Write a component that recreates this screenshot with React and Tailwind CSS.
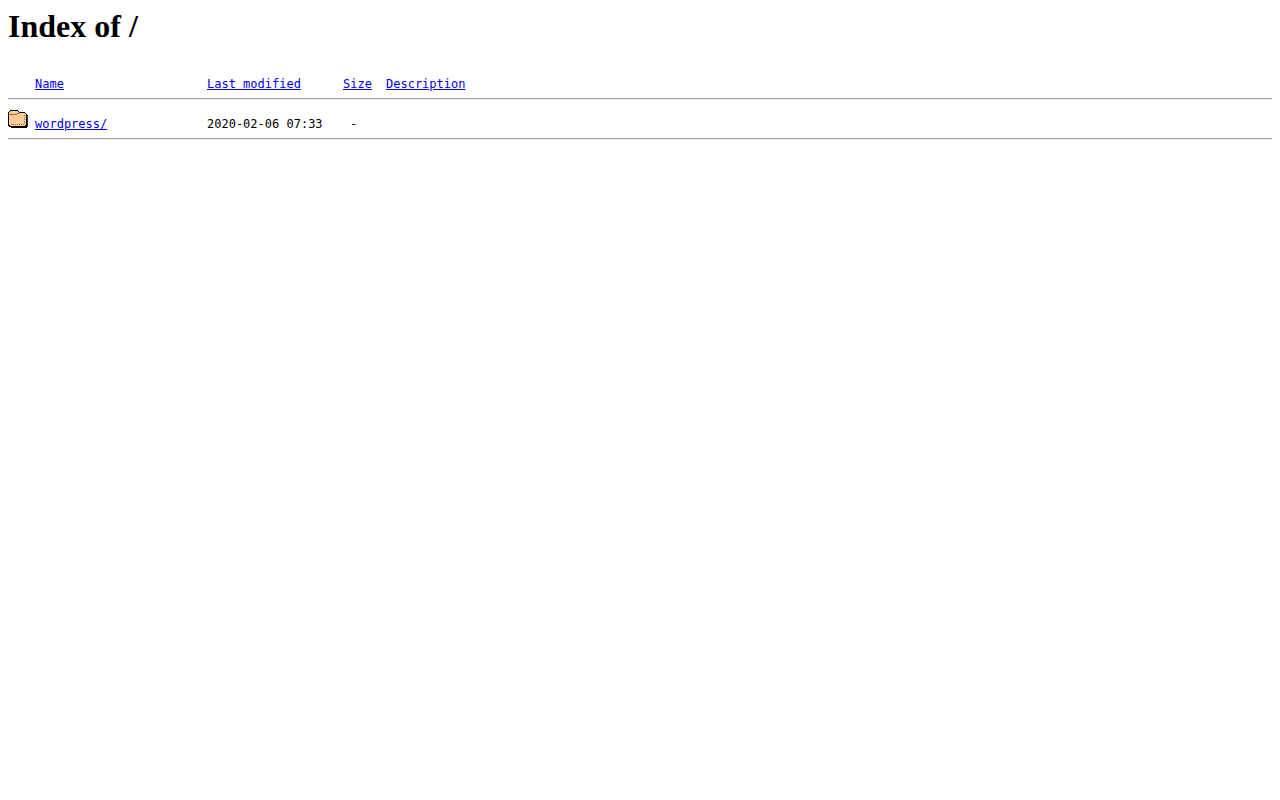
const columns = [
  { label: 'Name', href: '?C=N;O=D', width: 'w-[172px]' },
  { label: 'Last modified', href: '?C=M;O=A', width: 'w-[136px]' },
  { label: 'Size', href: '?C=S;O=A', width: 'w-[43px]' },
  { label: 'Description', href: '?C=D;O=A', width: 'w-auto' }
]

const entries = [
  { name: 'wordpress/', modified: '2020-02-06 07:33', size: '-', description: '' }
]

function FolderIcon() {
  return (
    <svg width="20" height="18" viewBox="0 0 20 18" shapeRendering="crispEdges" role="img" aria-label="[DIR]">
      {/* sombra y contorno */}
      <path fill="#000" d="M2 0h8v1h1v1h6v1h1v1h1v1h1v12h-1v1H3v-1H1v-1H0V2h1V1h1z" />
      <path fill="#333" d="M19 6h1v11h-1z" />
      {/* cuerpo */}
      <path fill="#fc9" d="M2 1h8v1h1v1h6v1h1v11h-1v1H2v-1H1V2h1z" />
      <path fill="#963" d="M1 4h8v1H1zM9 3h2v1H9z" />
      {/* costuras */}
      <path
        fill="#963"
        d="M3 14h1v1H3zM5 14h1v1H5zM7 14h1v1H7zM9 14h1v1H9zM11 14h1v1h-1zM13 14h1v1h-1zM15 14h1v1h-1zM16 5h1v1h-1zM16 7h1v1h-1zM16 9h1v1h-1zM16 11h1v1h-1zM16 13h1v1h-1z"
      />
    </svg>
  )
}

function RuleRow() {
  return (
    <tr>
      <td colSpan={5}>
        <hr className="h-[2px] border-t border-b border-t-[#9a9a9a] border-b-[#eeeeee]" />
      </td>
    </tr>
  )
}

export default function App() {
  return (
    <main className="p-2 bg-white text-black">
      <h1 className="text-[32px] leading-9 font-bold font-['Liberation_Serif',serif]">Index of /</h1>

      <table className="mt-8 w-full table-fixed text-left text-xs font-['DejaVu_Sans_Mono',monospace]">
        <thead>
          <tr>
            <th className="w-[27px]" aria-label="Type"></th>
            {columns.map(col => (
              <th key={col.label} className={`${col.width} pb-1.5 font-normal`}>
                <a href={col.href} className="text-[#0000ee] underline">{col.label}</a>
              </th>
            ))}
          </tr>
        </thead>
        <tbody>
          <RuleRow />
          {entries.map(entry => (
            <tr key={entry.name} className="align-bottom">
              <td className="pt-2.5 pb-2.5"><FolderIcon /></td>
              <td className="pb-1.5">
                <a href={entry.name} className="text-[#0000ee] underline">{entry.name}</a>
              </td>
              <td className="pb-1.5">{entry.modified}</td>
              <td className="pb-1.5 pl-[7px]">{entry.size}</td>
              <td className="pb-1.5">{entry.description}</td>
            </tr>
          ))}
          <RuleRow />
        </tbody>
      </table>
    </main>
  )
}
